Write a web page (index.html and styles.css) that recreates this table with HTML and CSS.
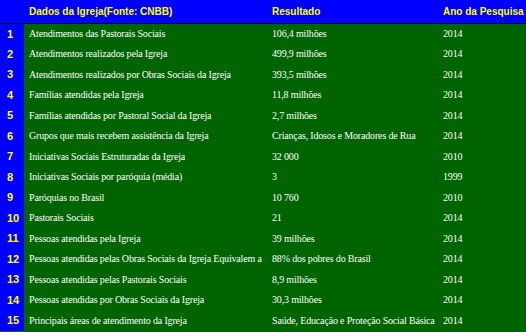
FILE: index.html
```html
<!DOCTYPE html>
<html>
<head>
<meta charset="utf-8">
<link rel="stylesheet" href="styles.css">
</head>
<body>
<table class="data">
<colgroup><col class="c-idx"><col class="c-name"><col class="c-res"><col class="c-year"></colgroup>
<thead>
<tr><th class="idx"></th><th>Dados da Igreja(Fonte: CNBB)</th><th>Resultado</th><th>Ano da Pesquisa</th></tr>
</thead>
<tbody>
<tr><td class="idx">1</td><td>Atendimentos das Pastorais Sociais</td><td>106,4 milhões</td><td>2014</td></tr>
<tr><td class="idx">2</td><td>Atendimentos realizados pela Igreja</td><td>499,9 milhões</td><td>2014</td></tr>
<tr><td class="idx">3</td><td>Atendimentos realizados por Obras Sociais da Igreja</td><td>393,5 milhões</td><td>2014</td></tr>
<tr><td class="idx">4</td><td>Famílias atendidas pela Igreja</td><td>11,8 milhões</td><td>2014</td></tr>
<tr><td class="idx">5</td><td>Famílias atendidas por Pastoral Social da Igreja</td><td>2,7 milhões</td><td>2014</td></tr>
<tr><td class="idx">6</td><td>Grupos que mais recebem assistência da Igreja</td><td>Crianças, Idosos e Moradores de Rua</td><td>2014</td></tr>
<tr><td class="idx">7</td><td>Iniciativas Sociais Estruturadas da Igreja</td><td>32 000</td><td>2010</td></tr>
<tr><td class="idx">8</td><td>Iniciativas Sociais por paróquia (média)</td><td>3</td><td>1999</td></tr>
<tr><td class="idx">9</td><td>Paróquias no Brasil</td><td>10 760</td><td>2010</td></tr>
<tr><td class="idx">10</td><td>Pastorais Sociais</td><td>21</td><td>2014</td></tr>
<tr><td class="idx">11</td><td>Pessoas atendidas pela Igreja</td><td>39 milhões</td><td>2014</td></tr>
<tr><td class="idx">12</td><td>Pessoas atendidas pelas Obras Sociais da Igreja Equivalem a</td><td>88% dos pobres do Brasil</td><td>2014</td></tr>
<tr><td class="idx">13</td><td>Pessoas atendidas pelas Pastorais Sociais</td><td>8,9 milhões</td><td>2014</td></tr>
<tr><td class="idx">14</td><td>Pessoas atendidas por Obras Sociais da Igreja</td><td>30,3 milhões</td><td>2014</td></tr>
<tr><td class="idx">15</td><td>Principais áreas de atendimento da Igreja</td><td>Saúde, Educação e Proteção Social Básica</td><td>2014</td></tr>
</tbody>
</table>
</body>
</html>
```
FILE: styles.css
```css
html, body {
  margin: 0;
  padding: 0;
  background: #006400;
  overflow: hidden;
}
.data {
  border-collapse: collapse;
  table-layout: fixed;
  width: 526px;
}
.c-idx { width: 24px; }
.c-name { width: 243px; }
.c-res { width: 171px; }
.c-year { width: 88px; }
.data thead tr {
  background: #0000ff;
  height: 23px;
  border-bottom: 1px solid #000033;
}
.data th {
  font-family: "Liberation Sans", Arial, sans-serif;
  font-weight: bold;
  font-size: 10px;
  color: #ffff00;
  text-align: left;
  padding: 0 0 0 5px;
  white-space: nowrap;
  overflow: hidden;
}
.data tbody tr {
  height: 20.5px;
}
.data td {
  font-family: "Liberation Serif", "Times New Roman", serif;
  font-size: 10px;
  letter-spacing: -0.17px;
  color: #ffffff;
  padding: 0 0 0 5px;
  white-space: nowrap;
  overflow: hidden;
  background: #006400;
}
.data td.idx, .data th.idx {
  background: #0000ff;
  font-family: "Liberation Sans", Arial, sans-serif;
  font-weight: bold;
  font-size: 11px;
  letter-spacing: 0;
  color: #ffff00;
  padding-left: 7px;
}
```
